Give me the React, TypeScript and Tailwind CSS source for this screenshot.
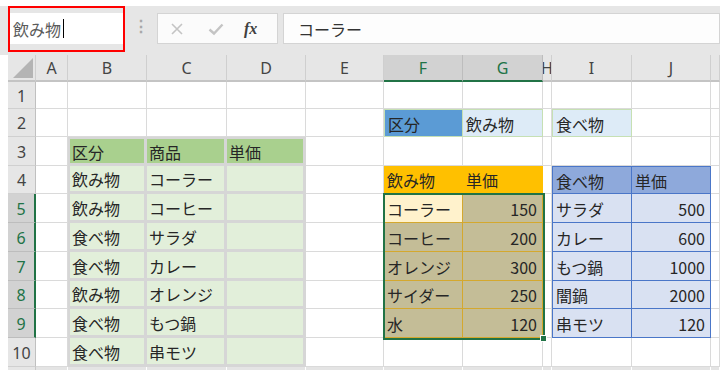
const COL_LETTERS = ["", "A", "B", "C", "D", "E", "F", "G", "H", "I", "J", ""];

// row index 1..11, column index 0..11 (0 = row header)
const DATA: Record<number, Record<number, string>> = {
  2: { 6: "区分", 7: "飲み物", 9: "食べ物" },
  3: { 2: "区分", 3: "商品", 4: "単価" },
  4: { 2: "飲み物", 3: "コーラー", 6: "飲み物", 7: "単価", 9: "食べ物", 10: "単価" },
  5: { 2: "飲み物", 3: "コーヒー", 6: "コーラー", 7: "150", 9: "サラダ", 10: "500" },
  6: { 2: "食べ物", 3: "サラダ", 6: "コーヒー", 7: "200", 9: "カレー", 10: "600" },
  7: { 2: "食べ物", 3: "カレー", 6: "オレンジ", 7: "300", 9: "もつ鍋", 10: "1000" },
  8: { 2: "飲み物", 3: "オレンジ", 6: "サイダー", 7: "250", 9: "闇鍋", 10: "2000" },
  9: { 2: "食べ物", 3: "もつ鍋", 6: "水", 7: "120", 9: "串モツ", 10: "120" },
  10: { 2: "食べ物", 3: "串モツ" },
};

function cellCls(r: number, c: number): string {
  if (r === 11) {
    return c === 0 ? "bg-[#e6e6e6] border-r border-[#c8c8c8]" : "bg-[#e4e4e4] border-r border-white";
  }
  if (c === 0) {
    if (r >= 5 && r <= 9)
      return "bg-[#d2d2d2] text-[#217346] border-r-2 border-r-[#217346] border-b border-b-[#bdbdbd] justify-center";
    return "bg-[#e6e6e6] text-[#444444] border-r border-r-[#c0c0c0] border-b border-b-[#d0d0d0] justify-center";
  }
  // table B3:D10
  if (c >= 2 && c <= 4 && r >= 3 && r <= 10) {
    const bg = r === 3 ? "bg-[#a9d08e]" : "bg-[#e2efda]";
    const left = c === 2 ? " border-l-2" : "";
    const top = r === 3 ? " border-t-2" : "";
    return bg + " border-r-[3px] border-b-[3px] border-[#d6d6d6] pl-[2px]" + left + top;
  }
  if (r === 2 && c === 6) return "bg-[#5b9bd5] border border-[#c6e0b4] pl-[3px]";
  if (r === 2 && c === 7) return "bg-[#ddebf7] border-y border-r border-[#c6e0b4] pl-[3px]";
  if (r === 2 && c === 9) return "bg-[#ddebf7] border border-[#c6e0b4] pl-[3px]";
  if (r === 4 && (c === 6 || c === 7)) return "bg-[#ffc000] border-b border-[#d4a82e] pl-[3px]";
  if (r >= 5 && r <= 9 && (c === 6 || c === 7)) {
    const bg = r === 5 && c === 6 ? "bg-[#fff2cc]" : "bg-[#c4bd97]";
    return bg + " border-r border-b border-[#d4a82e] " + (c === 7 ? "justify-end pr-[5px]" : "pl-[3px]");
  }
  if (r >= 4 && r <= 9 && (c === 9 || c === 10)) {
    const bg = r === 4 ? "bg-[#8ea9db]" : "bg-[#d9e1f2]";
    const left = c === 9 ? " border-l" : "";
    const top = r === 4 ? " border-t" : "";
    const align = c === 10 && r > 4 ? " justify-end pr-[5px]" : " pl-[3px]";
    return bg + " border-r border-b border-[#4a76c8]" + left + top + align;
  }
  return "bg-white border-r border-b border-[#dadada]";
}

function headerCls(c: number): string {
  if (c === 6 || c === 7)
    return "bg-[#d2d2d2] text-[#217346] border-r border-r-[#bdbdbd] border-b-2 border-b-[#217346]";
  return "bg-[#e6e6e6] text-[#444444] border-r border-r-[#cfcfcf] border-b-2 border-b-[#c4c4c4]";
}

export default function App() {
  const rows = [1, 2, 3, 4, 5, 6, 7, 8, 9, 10, 11];
  const cols = [0, 1, 2, 3, 4, 5, 6, 7, 8, 9, 10, 11];
  return (
    <div className="w-[720px] h-[377px] bg-white overflow-hidden font-['Noto_Sans_CJK_JP',sans-serif] text-[#262626]">
      {/* toolbar */}
      <div className="h-[6px] bg-white" />
      <div className="h-[49px] bg-[#e6e6e6] flex items-start pl-[8px]">
        <div className="w-[117px] h-[46px] border-2 border-[#ff0000] pt-[5px]">
          <div className="h-[31px] w-[113px] bg-white flex items-center pl-[3px] text-[16px] text-[#5a5a5a]">
            飲み物
            <span className="ml-[2px] w-px h-[19px] bg-black" />
          </div>
        </div>
        <div className="w-[32px] h-[38px] flex items-center justify-center text-[#a8a8a8] text-[16px] font-bold">⋮</div>
        <div className="mt-[7px] w-[121px] h-[31px] bg-[#fbfbfb] border border-[#d4d4d4] flex items-center">
          <span className="w-[40px] pl-[12px] text-[#c4c4c4]">
            <svg width="14" height="14" viewBox="0 0 14 14"><path d="M2 2L12 12M12 2L2 12" stroke="currentColor" strokeWidth="1.6" fill="none" /></svg>
          </span>
          <span className="w-[40px] pl-[10px] text-[#c4c4c4]">
            <svg width="16" height="14" viewBox="0 0 16 14"><path d="M1.5 7.5L6 11.5L14.5 2.5" stroke="currentColor" strokeWidth="2.4" fill="none" /></svg>
          </span>
          <span className="pl-[6px] font-['Liberation_Serif',serif] italic font-bold text-[16px] text-[#404040]">fx</span>
        </div>
        <div className="mt-[7px] ml-[5px] flex-1 h-[31px] bg-[#fdfdfd] border border-[#d4d4d4] flex items-center pl-[14px] text-[16px] text-[#333333]">
          コーラー
        </div>
      </div>

      {/* grid */}
      <div className="flex">
        <div className="w-[8px] bg-white" />
        <div className="relative grid grid-cols-[28px_32px_79px_80px_79px_78px_79px_80px_9px_80px_79px_9px] grid-rows-[27px_27px_28px_29px_28px_29px_29px_29px_28px_29px_29px_3px] text-[16px]">
          {cols.map((c) =>
            c === 0 ? (
              <div key="corner" className="bg-[#e6e6e6] border-r border-r-[#cfcfcf] border-b-2 border-b-[#c4c4c4] flex items-end justify-end p-[2px]">
                <svg width="20" height="20" viewBox="0 0 20 20"><polygon points="20,0 20,20 0,20" fill="#b4b4b4" /></svg>
              </div>
            ) : (
              <div key={"h" + c} className={"flex items-center justify-center overflow-hidden font-['Noto_Sans',sans-serif] " + headerCls(c)}>
                {COL_LETTERS[c]}
              </div>
            )
          )}
          {rows.map((r) =>
            cols.map((c) => (
              <div
                key={r + "-" + c}
                className={"flex items-center overflow-hidden whitespace-nowrap pt-[1px] " + cellCls(r, c) + (c === 0 ? " font-['Noto_Sans',sans-serif]" : "")}
              >
                {c === 0 ? (r === 11 ? "" : String(r)) : DATA[r]?.[c] ?? ""}
              </div>
            ))
          )}
          {/* selection F5:G9 */}
          <div className="absolute left-[375px] top-[138px] w-[162px] h-[147px] border-2 border-[#217346] pointer-events-none" />
          <div className="absolute left-[532px] top-[280px] w-[7px] h-[7px] bg-[#217346] border border-white" />
        </div>
      </div>
    </div>
  );
}
